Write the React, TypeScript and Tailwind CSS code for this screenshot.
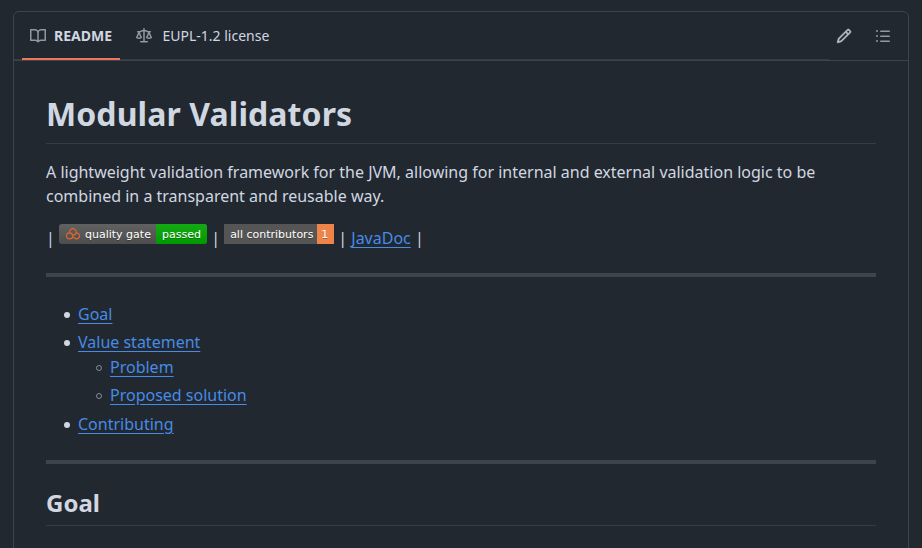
import type { ReactNode } from "react";

const icons = {
  book: "M0 1.75A.75.75 0 0 1 .75 1h4.253c1.227 0 2.317.59 3 1.501A3.743 3.743 0 0 1 11.006 1h4.245a.75.75 0 0 1 .75.75v10.5a.75.75 0 0 1-.75.75h-4.507a2.25 2.25 0 0 0-1.591.659l-.622.621a.75.75 0 0 1-1.06 0l-.622-.621A2.25 2.25 0 0 0 5.258 13H.75a.75.75 0 0 1-.75-.75Zm7.251 10.324.004-5.073-.002-2.253A2.25 2.25 0 0 0 5.003 2.5H1.5v9h3.757a3.75 3.75 0 0 1 1.994.574ZM8.755 4.75l-.004 7.322a3.752 3.752 0 0 1 1.992-.572H14.5v-9h-3.495a2.25 2.25 0 0 0-2.25 2.25Z",
  law: "M8.75.75V2h.985c.304 0 .603.08.867.231l1.29.736c.038.022.08.033.124.033h2.234a.75.75 0 0 1 0 1.5h-.427l2.111 4.692a.75.75 0 0 1-.154.838l-.53-.53.529.531-.001.002-.002.002-.006.006-.006.005-.01.01-.045.04c-.21.176-.441.327-.686.45C14.556 10.78 13.88 11 13 11a4.498 4.498 0 0 1-2.023-.454 3.544 3.544 0 0 1-.686-.45l-.045-.04-.016-.015-.006-.006-.004-.004v-.001a.75.75 0 0 1-.154-.838L12.178 4.5h-.162c-.305 0-.604-.079-.868-.231l-1.29-.736a.245.245 0 0 0-.124-.033H8.75V13h2.5a.75.75 0 0 1 0 1.5h-6.5a.75.75 0 0 1 0-1.5h2.5V3.5h-.984a.245.245 0 0 0-.124.033l-1.289.737c-.265.15-.564.23-.869.23h-.162l2.112 4.692a.75.75 0 0 1-.154.838l-.53-.53.529.531-.001.002-.002.002-.006.006-.016.015-.045.04c-.21.176-.441.327-.686.45C4.556 10.78 3.88 11 3 11a4.498 4.498 0 0 1-2.023-.454 3.544 3.544 0 0 1-.686-.45l-.045-.04-.016-.015-.006-.006-.004-.004v-.001a.75.75 0 0 1-.154-.838L2.178 4.5H1.75a.75.75 0 0 1 0-1.5h2.234a.249.249 0 0 0 .125-.033l1.288-.737c.265-.15.564-.23.869-.23h.984V.75a.75.75 0 0 1 1.5 0Zm2.945 8.477c.285.135.718.273 1.305.273s1.02-.138 1.305-.273L13 6.327Zm-10 0c.285.135.718.273 1.305.273s1.02-.138 1.305-.273L3 6.327Z",
  pencil: "M11.013 1.427a1.75 1.75 0 0 1 2.474 0l1.086 1.086a1.75 1.75 0 0 1 0 2.474l-8.61 8.61c-.21.21-.47.364-.756.445l-3.251.93a.75.75 0 0 1-.927-.928l.929-3.25c.081-.286.235-.547.445-.758l8.61-8.61Zm.176 4.823L9.75 4.81l-6.286 6.287a.253.253 0 0 0-.064.108l-.558 1.953 1.953-.558a.253.253 0 0 0 .108-.064Zm1.238-3.763a.25.25 0 0 0-.354 0L10.811 3.75l1.439 1.44 1.263-1.263a.25.25 0 0 0 0-.354Z",
  list: "M5.75 2.5h8.5a.75.75 0 0 1 0 1.5h-8.5a.75.75 0 0 1 0-1.5Zm0 5h8.5a.75.75 0 0 1 0 1.5h-8.5a.75.75 0 0 1 0-1.5Zm0 5h8.5a.75.75 0 0 1 0 1.5h-8.5a.75.75 0 0 1 0-1.5ZM2 14a1 1 0 1 1 0-2 1 1 0 0 1 0 2Zm1-6a1 1 0 1 1-2 0 1 1 0 0 1 2 0ZM2 4a1 1 0 1 1 0-2 1 1 0 0 1 0 2Z",
};

function Icon({ name, className = "fill-[#9198a1]" }: { name: keyof typeof icons; className?: string }) {
  return (
    <svg viewBox="0 0 16 16" className={`size-4 shrink-0 ${className}`}>
      <path d={icons[name]} />
    </svg>
  );
}

function Link({ children }: { children: ReactNode }) {
  return (
    <a href="#" className="text-[#478be6] underline underline-offset-[3.2px]">
      {children}
    </a>
  );
}

function Disc() {
  return <span className="mr-[8.25px] -ml-[13.75px] inline-block size-[5.5px] rounded-full bg-[#d1d7e0] align-[2px]" />;
}

function Circle() {
  return <span className="mr-2 -ml-[14px] inline-block size-1.5 rounded-full border border-[#d1d7e0]/55 align-[2px]" />;
}

function QualityBadge() {
  return (
    <span className="inline-block h-5 w-[148px] overflow-hidden rounded-[3px] font-['DejaVu_Sans',sans-serif] text-[11px] leading-[21px] text-white [text-shadow:0_1px_0_rgba(1,1,1,0.3)]">
      <span className="flex h-5 bg-linear-to-b from-[#616161] to-[#4d4d4d]">
        <span className="flex w-[97px] pl-[7px]">
          <svg viewBox="0 0 14 13" className="mt-[3px] mr-[5px] h-[13px] w-[14px] fill-none stroke-[#e0662b] stroke-[1.2]">
            <path d="M3.7 6.2A3.4 3.4 0 1 1 10.3 5.3C10 7 8.6 8.1 6.6 8.1" />
            <path d="M10.1 5.9A3 3 0 1 1 8.8 11.3C7.3 10.8 6.6 9.6 6.4 8.1C6.2 6.9 5.2 5.9 3.9 5.9A3 3 0 1 0 3.9 11.8C5.2 11.8 6.2 11.1 6.8 10.1" />
          </svg>
          quality gate
        </span>
        <span className="flex-1 bg-linear-to-b from-[#14aa14] to-[#009900] text-center">passed</span>
      </span>
    </span>
  );
}

function ContributorsBadge() {
  return (
    <span className="inline-block h-5 w-[110px] overflow-hidden font-['DejaVu_Sans',sans-serif] text-[11px] leading-[21px] text-white [text-shadow:0_1px_0_rgba(1,1,1,0.3)]">
      <span className="flex h-5 bg-[#555]">
        <span className="w-[93px] pl-[6px]">all contributors</span>
        <span className="w-[17px] bg-[#ee8449] pr-[2px] text-center">1</span>
      </span>
    </span>
  );
}

export default function App() {
  return (
    <div className="h-[548px] overflow-hidden bg-[#212830] pt-[11px] pl-[13px] font-['Noto_Sans',sans-serif] text-base text-[#d1d7e0]">
      <div className="h-[600px] w-[896px] rounded-md border border-[#3d444d]">
        <header className="flex h-[49px] border-b border-[#3d444d]">
          <nav className="flex h-12 w-[816px] border-b border-[#3d444db3] pl-2 text-sm">
            <div className="flex h-12 w-[98px] items-center gap-2 border-b-2 border-[#ec775c] pt-0.5 pl-2 font-bold">
              <Icon name="book" />
              README
            </div>
            <div className="flex h-12 items-center gap-[10.5px] pl-4">
              <Icon name="law" />
              EUPL-1.2 license
            </div>
          </nav>
          <div className="flex h-12 items-center gap-[23px] pl-[6px]">
            <Icon name="pencil" className="fill-[#b7bdc8] stroke-[#b7bdc8] stroke-[0.3]" />
            <Icon name="list" />
          </div>
        </header>
        <article className="p-8">
          <h1 className="mb-4 border-b border-[#3d444db3] pb-[8.6px] pt-px text-[32px] leading-10 font-bold tracking-[0.09px]">Modular Validators</h1>
          <p className="mb-4 leading-6">
            A lightweight validation framework for the JVM, allowing for internal and external validation logic to be combined in a transparent and reusable way.
          </p>
          <p className="h-[25.4px] leading-6">
            | <QualityBadge /> | <ContributorsBadge /> | <Link>JavaDoc</Link> |
          </p>
          <hr className="my-6 h-1 border-0 bg-[#3d444d]" />
          <ul className="h-[135px] pt-px pl-8 leading-6">
            <li><Disc /><Link>Goal</Link></li>
            <li className="mt-1">
              <Disc /><Link>Value statement</Link>
              <ul className="mt-px pl-8">
                <li><Circle /><Link>Problem</Link></li>
                <li className="mt-1"><Circle /><Link>Proposed solution</Link></li>
              </ul>
            </li>
            <li className="mt-[5px]"><Disc /><Link>Contributing</Link></li>
          </ul>
          <hr className="my-6 h-1 border-0 bg-[#3d444d]" />
          <h2 className="border-b border-[#3d444db3] pb-[7.2px] text-2xl leading-[30px] font-bold">Goal</h2>
        </article>
      </div>
    </div>
  );
}
